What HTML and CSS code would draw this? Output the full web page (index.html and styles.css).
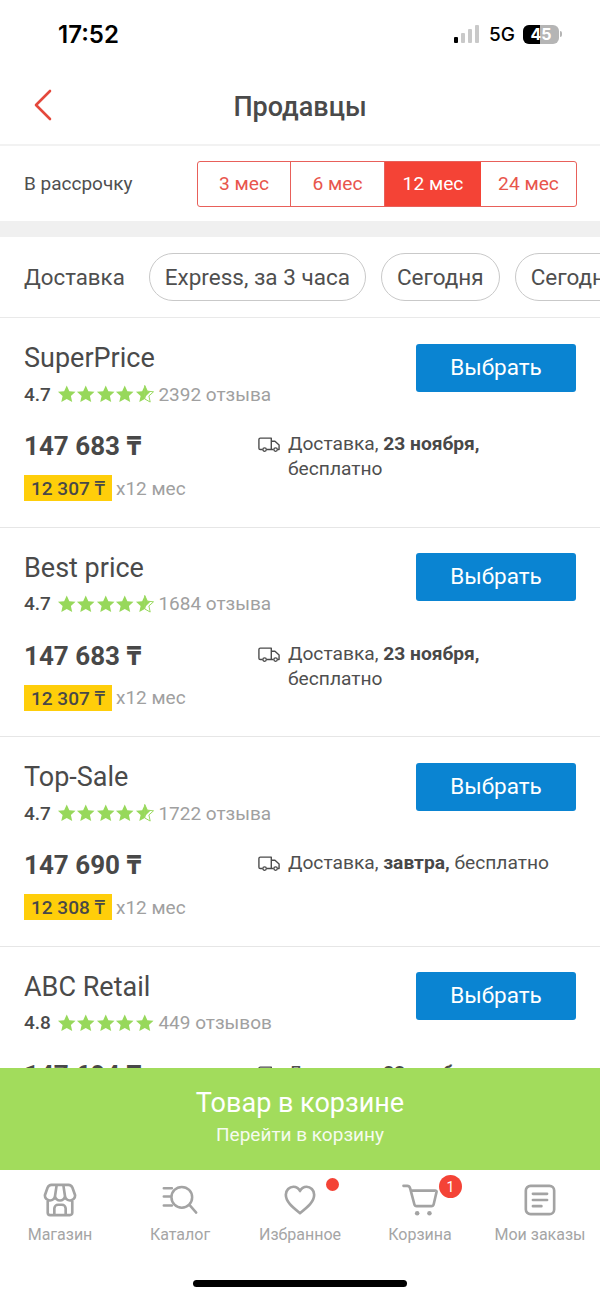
FILE: index.html
```html
<!DOCTYPE html>
<html lang="ru">
<head>
<meta charset="utf-8">
<title>Продавцы</title>
<link rel="stylesheet" href="styles.css">
</head>
<body>
<svg class="defs" width="0" height="0" aria-hidden="true">
  <symbol id="star" viewBox="0 0 24 24"><path d="M12 1.500l3.200 7 7.600.8-5.700 5.100 1.600 7.500L12 18.100l-6.700 3.800 1.600-7.500L1.200 9.300l7.600-.8z"/></symbol>
  <symbol id="star-part" viewBox="0 0 24 24"><path d="M12 1.500v16.600l-6.700 3.800 1.600-7.500L1.200 9.300l7.600-.8z"/><path d="M12 1.500l3.200 7 7.600.8-5.700 5.100 1.600 7.500L12 18.100z" fill="none" stroke="currentColor" stroke-width="1.200"/><path d="M12 1.500l3.200 7 4 .5-5.600 5.500L12 18.100z"/></symbol>
  <symbol id="truck" viewBox="0 0 24 16"><path d="M5 13.500H2.500A1.500 1.500 0 0 1 1 12V2.500A1.500 1.500 0 0 1 2.500 1H14.500V13.500H9.500M14.500 4.500H18.500L23 8.500V13.500H21.500M17 13.500H14.500" fill="none" stroke="currentColor" stroke-width="1.500" stroke-linejoin="round"/><circle cx="7.200" cy="13.500" r="1.900" fill="none" stroke="currentColor" stroke-width="1.400"/><circle cx="19.200" cy="13.500" r="1.900" fill="none" stroke="currentColor" stroke-width="1.400"/></symbol>
</svg>
<div class="app">
  <div class="status">
    <span class="time">17:52</span>
    <div class="status-right">
      <div class="signal"><i class="on s1"></i><i class="s2"></i><i class="s3"></i><i class="s4"></i></div>
      <span class="net">5G</span>
      <div class="battery"><div class="batt-body"><div class="batt-fill"></div><span class="batt-num">45</span></div><div class="batt-tip"></div></div>
    </div>
  </div>
  <header class="header">
    <svg class="back" width="20" height="32" viewBox="0 0 20 32"><path d="M17 2L3 16l14 14" fill="none" stroke="#e4483c" stroke-width="2.600" stroke-linecap="round" stroke-linejoin="round"/></svg>
    <h1 class="title">Продавцы</h1>
  </header>
  <section class="install">
    <span class="install-label">В рассрочку</span>
    <div class="seg">
      <span class="seg-item s-a">3 мес</span>
      <span class="seg-item s-b">6 мес</span>
      <span class="seg-item s-c active">12 мес</span>
      <span class="seg-item s-d">24 мес</span>
    </div>
  </section>
  <div class="band"></div>
  <section class="delivery">
    <span class="delivery-label">Доставка</span>
    <span class="chip">Express, за 3 часа</span>
    <span class="chip">Сегодня</span>
    <span class="chip">Сегодня, до 18:00</span>
  </section>
  <main class="list">
    <article class="seller">
      <div class="seller-top">
        <div>
          <div class="name">SuperPrice</div>
          <div class="rating"><b class="score">4.7</b><span class="stars"><svg><use href="#star"/></svg><svg><use href="#star"/></svg><svg><use href="#star"/></svg><svg><use href="#star"/></svg><svg><use href="#star-part"/></svg></span><span class="reviews">2392 отзыва</span></div>
        </div>
        <button class="pick">Выбрать</button>
      </div>
      <div class="seller-bottom">
        <div class="prices">
          <div class="price">147 683 ₸</div>
          <div class="monthly"><span class="badge">12 307 ₸</span><span class="times">х12 мес</span></div>
        </div>
        <div class="ship"><svg class="truck"><use href="#truck"/></svg><p>Доставка, <b>23 ноября,</b> бесплатно</p></div>
      </div>
    </article>
    <article class="seller">
      <div class="seller-top">
        <div>
          <div class="name">Best price</div>
          <div class="rating"><b class="score">4.7</b><span class="stars"><svg><use href="#star"/></svg><svg><use href="#star"/></svg><svg><use href="#star"/></svg><svg><use href="#star"/></svg><svg><use href="#star-part"/></svg></span><span class="reviews">1684 отзыва</span></div>
        </div>
        <button class="pick">Выбрать</button>
      </div>
      <div class="seller-bottom">
        <div class="prices">
          <div class="price">147 683 ₸</div>
          <div class="monthly"><span class="badge">12 307 ₸</span><span class="times">х12 мес</span></div>
        </div>
        <div class="ship"><svg class="truck"><use href="#truck"/></svg><p>Доставка, <b>23 ноября,</b> бесплатно</p></div>
      </div>
    </article>
    <article class="seller">
      <div class="seller-top">
        <div>
          <div class="name">Top-Sale</div>
          <div class="rating"><b class="score">4.7</b><span class="stars"><svg><use href="#star"/></svg><svg><use href="#star"/></svg><svg><use href="#star"/></svg><svg><use href="#star"/></svg><svg><use href="#star-part"/></svg></span><span class="reviews">1722 отзыва</span></div>
        </div>
        <button class="pick">Выбрать</button>
      </div>
      <div class="seller-bottom">
        <div class="prices">
          <div class="price">147 690 ₸</div>
          <div class="monthly"><span class="badge">12 308 ₸</span><span class="times">х12 мес</span></div>
        </div>
        <div class="ship"><svg class="truck"><use href="#truck"/></svg><p>Доставка, <b>завтра,</b> бесплатно</p></div>
      </div>
    </article>
    <article class="seller">
      <div class="seller-top">
        <div>
          <div class="name">ABC Retail</div>
          <div class="rating"><b class="score">4.8</b><span class="stars"><svg><use href="#star"/></svg><svg><use href="#star"/></svg><svg><use href="#star"/></svg><svg><use href="#star"/></svg><svg><use href="#star"/></svg></span><span class="reviews">449 отзывов</span></div>
        </div>
        <button class="pick">Выбрать</button>
      </div>
      <div class="seller-bottom">
        <div class="prices">
          <div class="price">147 694 ₸</div>
          <div class="monthly"><span class="badge">12 308 ₸</span><span class="times">х12 мес</span></div>
        </div>
        <div class="ship"><svg class="truck"><use href="#truck"/></svg><p>Доставка, <b>23 ноября,</b> бесплатно</p></div>
      </div>
    </article>
  </main>
  <section class="cart-banner">
    <div class="cart-title">Товар в корзине</div>
    <div class="cart-sub">Перейти в корзину</div>
  </section>
  <nav class="tabs">
    <div class="tab">
      <svg class="icon" viewBox="0 0 36 36"><path d="M9 2h18c2 0 3.300 1 4.200 3L34 13a5.300 5.300 0 0 1-5.300 5.500A5.300 5.300 0 0 1 23.300 14 5.300 5.300 0 0 1 18 18.500 5.300 5.300 0 0 1 12.700 14 5.300 5.300 0 0 1 7.300 18.500 5.300 5.300 0 0 1 2 13L4.800 5C5.700 3 7 2 9 2zM12.700 14L14.500 2M23.300 14L21.500 2M5 18v13.500A2.500 2.500 0 0 0 7.500 34h21a2.500 2.500 0 0 0 2.500-2.500V18M12 34v-7a4 4 0 0 1 4-4h4a4 4 0 0 1 4 4v7"/></svg>
      <span class="tab-label">Магазин</span>
    </div>
    <div class="tab">
      <svg class="icon" viewBox="0 0 40 36"><circle cx="22" cy="15" r="11.500"/><path d="M30.500 23.500L38 32M2 5h9M2 14h7M2 24h9"/></svg>
      <span class="tab-label">Каталог</span>
    </div>
    <div class="tab">
      <svg class="icon" viewBox="0 0 36 36"><path d="M18 32C10 25.500 3 20 3 12.500 3 7.500 6.800 4 11 4c3 0 5.500 1.500 7 4.500C19.500 5.500 22 4 25 4c4.200 0 8 3.500 8 8.500C33 20 26 25.500 18 32z"/></svg>
      <span class="tab-label">Избранное</span>
      <span class="dot"></span>
    </div>
    <div class="tab">
      <svg class="icon" viewBox="0 0 38 36"><path d="M1.500 3h4c1.500 0 2.500 1 3 2.500l4.500 17c.3 1.200 1 2 2.500 2H31c1.300 0 2.200-.8 2.500-2l3-13c.2-1-.4-1.500-1.500-1.500H9.500"/><circle class="fill" cx="16" cy="32" r="2.400"/><circle class="fill" cx="29" cy="32" r="2.400"/></svg>
      <span class="tab-label">Корзина</span>
      <span class="count">1</span>
    </div>
    <div class="tab">
      <svg class="icon" viewBox="0 0 36 36"><rect x="3" y="3" width="30" height="30" rx="5"/><path d="M10.500 11.500h15M10.500 18h15M10.500 24.500h9"/></svg>
      <span class="tab-label">Мои заказы</span>
    </div>
    <div class="home-bar"></div>
  </nav>
</div>
</body>
</html>
```

FILE: styles.css
```css
* { box-sizing: border-box; }
html, body { margin: 0; padding: 0; background: #fff; }
body { width: 600px; height: 1297px; overflow: hidden; font-family: Roboto, "Noto Sans", sans-serif; color: #484848; }
.defs { position: absolute; }
.app { width: 600px; height: 1297px; display: flex; flex-direction: column; overflow: hidden; }

.status { height: 70px; flex: none; display: flex; justify-content: space-between; align-items: center; padding: 0 38px 2px 58px; }
.time { font-family: Inter, sans-serif; font-weight: 600; font-size: 24px; color: #000; }
.status-right { display: flex; align-items: center; }
.signal { display: flex; align-items: flex-end; gap: 3px; height: 18px; margin-right: 10px; }
.signal i { width: 4px; border-radius: 1px; background: #c9c9c9; display: block; }
.signal .on { background: #000; }
.s1 { height: 6px; }
.s2 { height: 10px; }
.s3 { height: 14px; }
.s4 { height: 18px; }
.net { font-family: Inter, sans-serif; font-weight: 500; font-size: 19px; color: #000; margin-right: 8px; }
.battery { display: flex; align-items: center; gap: 1px; }
.batt-body { position: relative; width: 36px; height: 19px; border-radius: 6px; background: #b5b5b5; overflow: hidden; display: flex; align-items: center; justify-content: center; }
.batt-fill { position: absolute; left: 0; top: 0; bottom: 0; width: 17px; background: #000; }
.batt-num { position: relative; font-family: Inter, sans-serif; font-weight: 700; font-size: 16px; color: #fff; }
.batt-tip { width: 2px; height: 6px; border-radius: 0 2px 2px 0; background: #b5b5b5; }

.header { height: 76px; flex: none; display: flex; align-items: center; justify-content: center; position: relative; border-bottom: 2px solid #f2f2f2; }
.back { position: absolute; left: 33px; top: 19px; }
.title { margin: 0; font-size: 27px; font-weight: 500; color: #4a4a4a; }

.install { height: 75px; flex: none; display: flex; align-items: center; justify-content: space-between; padding: 0 23px 0 24px; }
.install-label { font-size: 19px; color: #4f4f4f; }
.seg { display: flex; width: 380px; height: 46px; border: 1.500px solid #e8605a; border-radius: 3px; overflow: hidden; }
.seg-item { display: flex; align-items: center; justify-content: center; font-size: 19.200px; color: #e8554c; border-right: 1.500px solid #e8605a; }
.s-a { width: 93px; }
.s-b { width: 94px; }
.s-c { width: 96px; border-right: 0; }
.s-d { flex: 1; border-right: 0; }
.seg-item.active { background: #f44336; color: #fff; }
.band { height: 16px; flex: none; background: #f0f0f0; }

.delivery { height: 81px; flex: none; display: flex; align-items: center; gap: 15px; padding-left: 24px; border-bottom: 1px solid #e9e9e9; overflow: hidden; white-space: nowrap; }
.delivery-label { font-size: 22.300px; color: #4f4f4f; margin-right: 9px; }
.chip { flex: none; height: 48px; display: flex; align-items: center; padding: 0 15px; border: 1px solid #c9c9c9; border-radius: 24px; font-size: 22.500px; color: #4f4f4f; }

.list { flex: 1; min-height: 0; overflow: hidden; padding-top: .4px; }
.seller { height: 209.400px; padding: 25.600px 24px 0; border-bottom: 1px solid #e6e6e6; }
.seller-top { display: flex; justify-content: space-between; align-items: flex-start; }
.name { font-size: 27px; line-height: 30px; margin-top: -.5px; color: #4a4a4a; }
.rating { display: flex; align-items: center; height: 24px; margin-top: 8.900px; font-size: 19px; }
.score { font-weight: 500; color: #4a4a4a; }
.stars { display: flex; margin: 0 4px 0 6px; color: #97d85b; fill: #97d85b; }
.stars svg { width: 19.500px; height: 20px; display: block; }
.reviews { color: #a0a0a0; }
.pick { width: 160px; height: 48px; border: 0; border-radius: 3px; background: #0a84d2; color: #fff; font-family: inherit; font-size: 22.500px; padding: 0 0 2px; }
.seller-bottom { display: flex; margin-top: 24px; }
.prices { width: 234px; flex: none; }
.price { font-size: 26px; line-height: 32px; font-weight: 700; color: #484848; }
.monthly { display: flex; align-items: center; margin-top: 13px; }
.badge { height: 26px; width: 88px; background: #ffce0a; display: flex; align-items: center; justify-content: center; font-size: 19px; font-weight: 500; color: #484848; white-space: nowrap; }
.times { margin-left: 4px; font-size: 19px; color: #a0a0a0; }
.ship { display: flex; gap: 8px; padding-top: 1px; }
.truck { width: 22px; height: 15px; flex: none; margin-top: 6px; color: #4a4a4a; }
.ship p { margin: 0; width: 270px; font-size: 19.200px; line-height: 25px; color: #4f4f4f; }
.ship b { font-weight: 700; color: #484848; }

.cart-banner { height: 102px; flex: none; background: #a2dc5c; color: #fff; display: flex; flex-direction: column; align-items: center; padding-top: 18px; }
.cart-title { font-size: 27px; line-height: 34px; }
.cart-sub { font-size: 19px; line-height: 24px; margin-top: 3px; opacity: .9; }

.tabs { height: 127px; flex: none; position: relative; display: flex; padding-top: 13px; }
.tab { width: 120px; position: relative; display: flex; flex-direction: column; align-items: center; }
.icon { width: 36px; height: 34px; fill: none; stroke: #a3a3a3; stroke-width: 2.800; stroke-linecap: round; stroke-linejoin: round; }
.icon .fill { fill: #a3a3a3; stroke: none; }
.tab-label { margin-top: 8px; font-size: 16px; line-height: 20px; color: #a5a5a5; white-space: nowrap; }
.dot { position: absolute; left: 85.500px; top: -5px; width: 13px; height: 13px; border-radius: 50%; background: #f44336; }
.count { position: absolute; left: 79px; top: -8px; width: 23px; height: 23px; border-radius: 50%; background: #f44336; color: #fff; font-size: 14px; display: flex; align-items: center; justify-content: center; }
.home-bar { position: absolute; left: 193px; top: 110px; width: 214px; height: 7px; border-radius: 4px; background: #000; }
```
